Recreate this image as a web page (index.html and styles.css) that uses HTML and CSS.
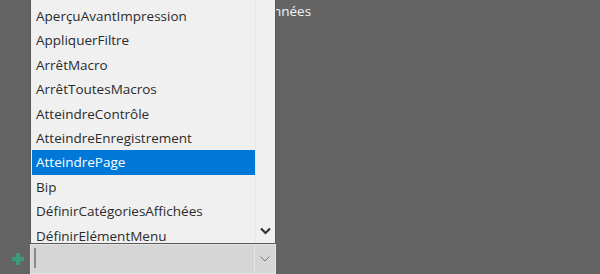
FILE: index.html
```html
<!DOCTYPE html>
<html>
<head>
    <title>Liste des actions</title>
    <link rel="stylesheet" href="styles.css">
</head>
<body>

<div class="panel">
    <div class="label-row">Données</div>

    <!-- Drop-down list of actions -->
    <div class="dropdown">
        <ul class="options">
            <li>AperçuAvantImpression</li>
            <li>AppliquerFiltre</li>
            <li>ArrêtMacro</li>
            <li>ArrêtToutesMacros</li>
            <li>AtteindreContrôle</li>
            <li>AtteindreEnregistrement</li>
            <li class="selected">AtteindrePage</li>
            <li>Bip</li>
            <li>DéfinirCatégoriesAffichées</li>
            <li>DéfinirElémentMenu</li>
        </ul>
        <div class="scrollbar">
            <svg width="11" height="8" viewBox="0 0 11 8">
                <path d="M1 1.5 L5.5 6 L10 1.5" fill="none" stroke="#333" stroke-width="2.2"/>
            </svg>
        </div>
    </div>

    <!-- New action row -->
    <div class="add-row">
        <span class="plus">
            <svg width="12" height="12" viewBox="0 0 12 12">
                <path d="M4 0 H8 V4 H12 V8 H8 V12 H4 V8 H0 V4 H4 Z" fill="#3d9b7b"/>
            </svg>
        </span>
        <div class="combo">
            <div class="combo-input"><span class="caret"></span></div>
            <div class="combo-button">
                <svg width="10" height="6" viewBox="0 0 10 6">
                    <path d="M0.5 0.5 L5 5 L9.5 0.5" fill="none" stroke="#777" stroke-width="1"/>
                </svg>
            </div>
        </div>
    </div>
</div>

</body>
</html>
```

FILE: styles.css
```css
body {
    margin: 0;
    padding: 0;
    background-color: #646464;
    font-family: "Open Sans", "Noto Sans", sans-serif;
    font-size: 13.5px;
    color: #333;
}

.panel {
    position: relative;
    height: 274px;
    overflow: hidden;
}

.label-row {
    color: #f2f2f2;
    padding: 1px 0 0 255px;
    line-height: 20px;
}

.dropdown {
    position: absolute;
    left: 30px;
    top: 0;
    width: 244px;
    height: 243px;
    display: flex;
    background-color: #f0f0f0;
    border: 1px solid #5a5a5a;
    border-top: none;
}

.options {
    list-style: none;
    margin: 0;
    padding: 4px 0 0 1px;
    flex: 1;
}

.options li {
    height: 24.4px;
    line-height: 24px;
    padding-left: 4px;
    white-space: nowrap;
    color: #2b2b2b;
}

.options li.selected {
    background-color: #0078d7;
    color: #fff;
}

.scrollbar {
    width: 19px;
    border-left: 1px solid #e6e6e6;
    display: flex;
    flex-direction: column;
    justify-content: flex-end;
    align-items: center;
    padding-bottom: 8px;
}

.add-row {
    position: absolute;
    left: 0;
    top: 244px;
    right: 0;
    display: flex;
    align-items: center;
}

.plus {
    width: 30px;
    display: flex;
    justify-content: center;
    padding-left: 6px;
    box-sizing: border-box;
}

.combo {
    display: flex;
    width: 246px;
    height: 30px;
    box-sizing: border-box;
    border: 1px solid #e3e3e3;
    background-color: #d6d6d6;
}

.combo-input {
    flex: 1;
    padding: 3px 0 0 3px;
}

.caret {
    display: block;
    width: 2px;
    height: 20px;
    background-color: #8a8a8a;
}

.combo-button {
    width: 20px;
    border-left: 1px solid #e3e3e3;
    display: flex;
    justify-content: center;
    align-items: center;
}
```
